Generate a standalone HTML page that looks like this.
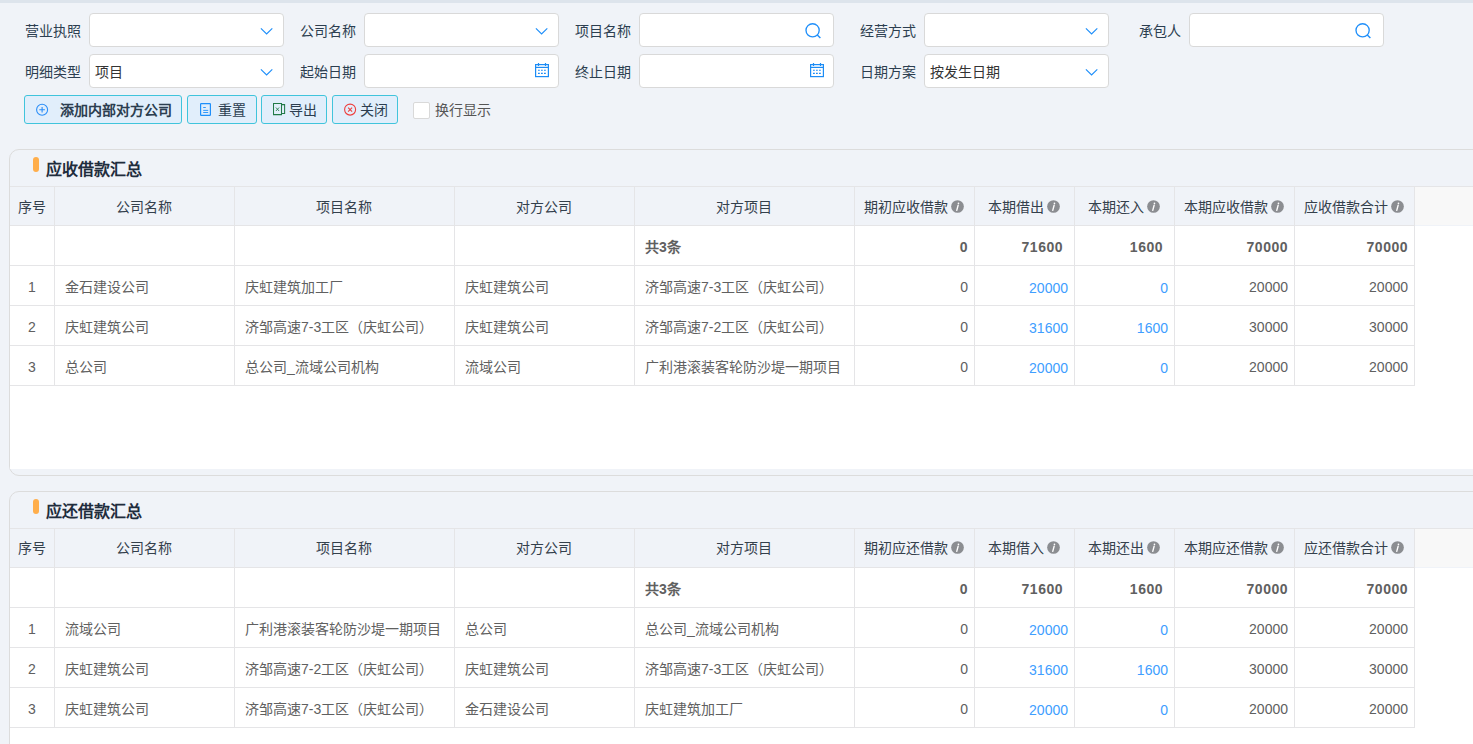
<!DOCTYPE html><html lang="zh-CN"><head><meta charset="utf-8"><style>
*{margin:0;padding:0;box-sizing:border-box}
html,body{width:1473px;height:744px;overflow:hidden}
body{background:#f0f3f8;font-family:"Liberation Sans", sans-serif;font-size:14px;color:#333;position:relative}
.top{position:absolute;left:0;top:0;width:1473px;height:3px;background:#dde4ec}
.lab{position:absolute;width:100px;text-align:right;height:34px;line-height:34px;padding-top:1px;color:#2c3e50;white-space:nowrap}
.inp{position:absolute;height:34px;background:#fff;border:1px solid #d9d9d9;border-radius:4px;line-height:32px;padding-top:1px;padding-left:5px;color:#333;white-space:nowrap}
.ic{position:absolute;display:block}
.btn{position:absolute;top:95px;height:29px;background:#e1eefb;border:1px solid #40c4dc;border-radius:3px}
.btn span{position:absolute;top:1px;line-height:27px;color:#2c3e50;white-space:nowrap}
.chk{position:absolute;left:413px;top:102px;width:17px;height:17px;background:#fff;border:1px solid #d9d9d9;border-radius:2px}
.chklab{position:absolute;left:435px;top:96px;line-height:29px;color:#555;white-space:nowrap}
.card{position:absolute;left:9px;width:1480px;border:1px solid #dcdcdc;border-radius:10px;background:#f0f3f8}
.pill{position:absolute;left:33px;width:6px;height:15px;border-radius:3px;background:#ffae4b}
.title{position:absolute;left:46px;font-size:16px;font-weight:bold;color:#1f2d3d;line-height:20px;white-space:nowrap}
.hdr{position:absolute;left:10px;width:1405px;height:40px;background:#f0f3f8}
.hdrx{position:absolute;left:1415px;width:70px;height:38px;background:#f8f8f8}
.body{position:absolute;left:10px;width:1470px;background:#fff}
.hl{position:absolute;left:10px;width:1405px;height:1px;background:#e5e5e7}
.vl{position:absolute;width:1px;background:#e5e5e7}
.th{position:absolute;height:38px;line-height:38px;padding-top:1px;text-align:center;color:#34404c;white-space:nowrap}
.info{display:inline-block;margin-left:3px;vertical-align:-1px}
.td{position:absolute;height:40px;line-height:40px;padding-top:1px;color:#606060;white-space:nowrap}
.td.c{text-align:center}
.td.r{text-align:right;padding-top:1px}
.td.c{padding-top:1px}
.td.lnk{padding-top:2px}
.td.sm{padding-top:1px;letter-spacing:0.5px}
.td.b{font-weight:bold}
.td.lnk{color:#409eff}
</style></head><body><div class="top"></div><div class="lab" style="left:-19px;top:13px">营业执照</div><div class="inp" style="left:89px;top:13px;width:195px"></div><svg class="ic" style="left:260px;top:27px" width="14" height="8" viewBox="0 0 14 8"><path d="M0.9 1.3 L6.6 7 L12.3 1.3" fill="none" stroke="#1f8ffa" stroke-width="1.15"/></svg><div class="lab" style="left:256px;top:13px">公司名称</div><div class="inp" style="left:364px;top:13px;width:195px"></div><svg class="ic" style="left:535px;top:27px" width="14" height="8" viewBox="0 0 14 8"><path d="M0.9 1.3 L6.6 7 L12.3 1.3" fill="none" stroke="#1f8ffa" stroke-width="1.15"/></svg><div class="lab" style="left:531px;top:13px">项目名称</div><div class="inp" style="left:639px;top:13px;width:195px"></div><svg class="ic" style="left:805px;top:22px" width="18" height="18" viewBox="0 0 18 18"><circle cx="7.6" cy="8.3" r="6.6" fill="none" stroke="#1f8ffa" stroke-width="1.35"/><path d="M12.3 13 L15.4 16.1" stroke="#1f8ffa" stroke-width="1.35"/></svg><div class="lab" style="left:816px;top:13px">经营方式</div><div class="inp" style="left:924px;top:13px;width:185px"></div><svg class="ic" style="left:1085px;top:27px" width="14" height="8" viewBox="0 0 14 8"><path d="M0.9 1.3 L6.6 7 L12.3 1.3" fill="none" stroke="#1f8ffa" stroke-width="1.15"/></svg><div class="lab" style="left:1081px;top:13px">承包人</div><div class="inp" style="left:1189px;top:13px;width:195px"></div><svg class="ic" style="left:1355px;top:22px" width="18" height="18" viewBox="0 0 18 18"><circle cx="7.6" cy="8.3" r="6.6" fill="none" stroke="#1f8ffa" stroke-width="1.35"/><path d="M12.3 13 L15.4 16.1" stroke="#1f8ffa" stroke-width="1.35"/></svg><div class="lab" style="left:-19px;top:54px">明细类型</div><div class="inp" style="left:89px;top:54px;width:195px">项目</div><svg class="ic" style="left:260px;top:68px" width="14" height="8" viewBox="0 0 14 8"><path d="M0.9 1.3 L6.6 7 L12.3 1.3" fill="none" stroke="#1f8ffa" stroke-width="1.15"/></svg><div class="lab" style="left:256px;top:54px">起始日期</div><div class="inp" style="left:364px;top:54px;width:195px"></div><svg class="ic" style="left:534px;top:62px" width="16" height="16" viewBox="0 0 16 16"><rect x="1.6" y="2.6" width="12.8" height="12" fill="none" stroke="#1c8cf5" stroke-width="1.2"/><path d="M1.6 5.4 H14.4" stroke="#1c8cf5" stroke-width="1.2"/><path d="M4.5 1 V4 M11.5 1 V4" stroke="#1c8cf5" stroke-width="1.2"/><path d="M4 8.2 H12 M4 11.4 H12" stroke="#1c8cf5" stroke-width="1.1" stroke-dasharray="1.8 1.2"/></svg><div class="lab" style="left:531px;top:54px">终止日期</div><div class="inp" style="left:639px;top:54px;width:195px"></div><svg class="ic" style="left:809px;top:62px" width="16" height="16" viewBox="0 0 16 16"><rect x="1.6" y="2.6" width="12.8" height="12" fill="none" stroke="#1c8cf5" stroke-width="1.2"/><path d="M1.6 5.4 H14.4" stroke="#1c8cf5" stroke-width="1.2"/><path d="M4.5 1 V4 M11.5 1 V4" stroke="#1c8cf5" stroke-width="1.2"/><path d="M4 8.2 H12 M4 11.4 H12" stroke="#1c8cf5" stroke-width="1.1" stroke-dasharray="1.8 1.2"/></svg><div class="lab" style="left:816px;top:54px">日期方案</div><div class="inp" style="left:924px;top:54px;width:185px">按发生日期</div><svg class="ic" style="left:1085px;top:68px" width="14" height="8" viewBox="0 0 14 8"><path d="M0.9 1.3 L6.6 7 L12.3 1.3" fill="none" stroke="#1f8ffa" stroke-width="1.15"/></svg><div class="btn" style="left:24px;width:158px"><svg class="ic" style="left:10px;top:7px" width="14" height="14" viewBox="0 0 14 14"><circle cx="7.1" cy="6.7" r="5.5" fill="none" stroke="#2b8ef8" stroke-width="1.1"/><path d="M7.1 4 V9.4 M4.3 6.7 H9.9" stroke="#2b8ef8" stroke-width="1.1"/></svg><span style="left:35px;font-weight:bold">添加内部对方公司</span></div><div class="btn" style="left:187px;width:70px"><svg class="ic" style="left:12px;top:7px" width="12" height="14" viewBox="0 0 12 14"><rect x="0.6" y="0.6" width="9.8" height="11.8" rx="0.6" fill="none" stroke="#1e8ffa" stroke-width="1.2"/><path d="M3.2 4.5 H5.8 M3.2 7.4 H8.2 M3.2 9.5 H8.2" stroke="#1e8ffa" stroke-width="0.9"/></svg><span style="left:30px">重置</span></div><div class="btn" style="left:261px;width:66px"><svg class="ic" style="left:11px;top:7px" width="14" height="14" viewBox="0 0 14 14"><path d="M0.5 0.5 H8.5 V11.6 H0.5 Z" fill="none" stroke="#217a48" stroke-width="1.05"/><path d="M8.5 1.6 H11.6 V10.5 H8.5" fill="none" stroke="#217a48" stroke-width="1.05"/><path d="M2.9 4.5 L6.1 8 M6.1 4.5 L2.9 8" stroke="#217a48" stroke-width="0.85"/></svg><span style="left:27px">导出</span></div><div class="btn" style="left:332px;width:66px"><svg class="ic" style="left:11px;top:7px" width="14" height="14" viewBox="0 0 14 14"><circle cx="6.1" cy="6.6" r="5.5" fill="none" stroke="#ee3e3e" stroke-width="1.1"/><path d="M4.1 4.6 L8.1 8.6 M8.1 4.6 L4.1 8.6" stroke="#ee3e3e" stroke-width="1.1"/></svg><span style="left:27px">关闭</span></div><div class="chk"></div><div class="chklab">换行显示</div><div class="card" style="top:149px;height:327px"></div><div class="pill" style="top:157px"></div><div class="title" style="top:160px">应收借款汇总</div><div class="hdr" style="top:186px"></div><div class="hdrx" style="top:187px"></div><div class="body" style="top:226px;height:243px"></div><div class="hl" style="top:186px;width:1470px"></div><div class="hl" style="top:225px"></div><div class="hl" style="top:265px"></div><div class="hl" style="top:305px"></div><div class="hl" style="top:345px"></div><div class="hl" style="top:385px"></div><div class="vl" style="left:54px;top:186px;height:200px"></div><div class="vl" style="left:234px;top:186px;height:200px"></div><div class="vl" style="left:454px;top:186px;height:200px"></div><div class="vl" style="left:634px;top:186px;height:200px"></div><div class="vl" style="left:854px;top:186px;height:200px"></div><div class="vl" style="left:974px;top:186px;height:200px"></div><div class="vl" style="left:1074px;top:186px;height:200px"></div><div class="vl" style="left:1174px;top:186px;height:200px"></div><div class="vl" style="left:1294px;top:186px;height:200px"></div><div class="vl" style="left:1414px;top:186px;height:200px"></div><div class="th" style="left:10px;width:44px;top:187px">序号</div><div class="th" style="left:54px;width:180px;top:187px">公司名称</div><div class="th" style="left:234px;width:220px;top:187px">项目名称</div><div class="th" style="left:454px;width:180px;top:187px">对方公司</div><div class="th" style="left:634px;width:220px;top:187px">对方项目</div><div class="th" style="left:854px;width:120px;top:187px">期初应收借款<svg class="info" width="13" height="13" viewBox="0 0 13 13"><circle cx="6.5" cy="6.5" r="6.35" fill="#8b8d91"/><circle cx="7.45" cy="3.3" r="0.85" fill="#fff"/><path d="M7.15 5.2 L5.75 10.4" stroke="#fff" stroke-width="1.35" stroke-linecap="round"/></svg></div><div class="th" style="left:974px;width:100px;top:187px">本期借出<svg class="info" width="13" height="13" viewBox="0 0 13 13"><circle cx="6.5" cy="6.5" r="6.35" fill="#8b8d91"/><circle cx="7.45" cy="3.3" r="0.85" fill="#fff"/><path d="M7.15 5.2 L5.75 10.4" stroke="#fff" stroke-width="1.35" stroke-linecap="round"/></svg></div><div class="th" style="left:1074px;width:100px;top:187px">本期还入<svg class="info" width="13" height="13" viewBox="0 0 13 13"><circle cx="6.5" cy="6.5" r="6.35" fill="#8b8d91"/><circle cx="7.45" cy="3.3" r="0.85" fill="#fff"/><path d="M7.15 5.2 L5.75 10.4" stroke="#fff" stroke-width="1.35" stroke-linecap="round"/></svg></div><div class="th" style="left:1174px;width:120px;top:187px">本期应收借款<svg class="info" width="13" height="13" viewBox="0 0 13 13"><circle cx="6.5" cy="6.5" r="6.35" fill="#8b8d91"/><circle cx="7.45" cy="3.3" r="0.85" fill="#fff"/><path d="M7.15 5.2 L5.75 10.4" stroke="#fff" stroke-width="1.35" stroke-linecap="round"/></svg></div><div class="th" style="left:1294px;width:120px;top:187px">应收借款合计<svg class="info" width="13" height="13" viewBox="0 0 13 13"><circle cx="6.5" cy="6.5" r="6.35" fill="#8b8d91"/><circle cx="7.45" cy="3.3" r="0.85" fill="#fff"/><path d="M7.15 5.2 L5.75 10.4" stroke="#fff" stroke-width="1.35" stroke-linecap="round"/></svg></div><div class="td b" style="left:645px;top:226px">共3条</div><div class="td b r sm" style="left:854px;width:114px;top:226px">0</div><div class="td b r sm" style="left:974px;width:89px;top:226px">71600</div><div class="td b r sm" style="left:1074px;width:89px;top:226px">1600</div><div class="td b r sm" style="left:1174px;width:114px;top:226px">70000</div><div class="td b r sm" style="left:1294px;width:114px;top:226px">70000</div><div class="td c" style="left:10px;width:44px;top:266px">1</div><div class="td" style="left:65px;top:266px">金石建设公司</div><div class="td" style="left:245px;top:266px">庆虹建筑加工厂</div><div class="td" style="left:465px;top:266px">庆虹建筑公司</div><div class="td" style="left:645px;top:266px">济邹高速7-3工区（庆虹公司）</div><div class="td r" style="left:854px;width:114px;top:266px">0</div><div class="td r lnk" style="left:974px;width:94px;top:266px">20000</div><div class="td r lnk" style="left:1074px;width:94px;top:266px">0</div><div class="td r" style="left:1174px;width:114px;top:266px">20000</div><div class="td r" style="left:1294px;width:114px;top:266px">20000</div><div class="td c" style="left:10px;width:44px;top:306px">2</div><div class="td" style="left:65px;top:306px">庆虹建筑公司</div><div class="td" style="left:245px;top:306px">济邹高速7-3工区（庆虹公司）</div><div class="td" style="left:465px;top:306px">庆虹建筑公司</div><div class="td" style="left:645px;top:306px">济邹高速7-2工区（庆虹公司）</div><div class="td r" style="left:854px;width:114px;top:306px">0</div><div class="td r lnk" style="left:974px;width:94px;top:306px">31600</div><div class="td r lnk" style="left:1074px;width:94px;top:306px">1600</div><div class="td r" style="left:1174px;width:114px;top:306px">30000</div><div class="td r" style="left:1294px;width:114px;top:306px">30000</div><div class="td c" style="left:10px;width:44px;top:346px">3</div><div class="td" style="left:65px;top:346px">总公司</div><div class="td" style="left:245px;top:346px">总公司_流域公司机构</div><div class="td" style="left:465px;top:346px">流域公司</div><div class="td" style="left:645px;top:346px">广利港滚装客轮防沙堤一期项目</div><div class="td r" style="left:854px;width:114px;top:346px">0</div><div class="td r lnk" style="left:974px;width:94px;top:346px">20000</div><div class="td r lnk" style="left:1074px;width:94px;top:346px">0</div><div class="td r" style="left:1174px;width:114px;top:346px">20000</div><div class="td r" style="left:1294px;width:114px;top:346px">20000</div><div class="card" style="top:491px;height:400px"></div><div class="pill" style="top:499px"></div><div class="title" style="top:502px">应还借款汇总</div><div class="hdr" style="top:528px"></div><div class="hdrx" style="top:529px"></div><div class="body" style="top:568px;height:300px"></div><div class="hl" style="top:528px;width:1470px"></div><div class="hl" style="top:567px"></div><div class="hl" style="top:607px"></div><div class="hl" style="top:647px"></div><div class="hl" style="top:687px"></div><div class="hl" style="top:727px"></div><div class="vl" style="left:54px;top:528px;height:200px"></div><div class="vl" style="left:234px;top:528px;height:200px"></div><div class="vl" style="left:454px;top:528px;height:200px"></div><div class="vl" style="left:634px;top:528px;height:200px"></div><div class="vl" style="left:854px;top:528px;height:200px"></div><div class="vl" style="left:974px;top:528px;height:200px"></div><div class="vl" style="left:1074px;top:528px;height:200px"></div><div class="vl" style="left:1174px;top:528px;height:200px"></div><div class="vl" style="left:1294px;top:528px;height:200px"></div><div class="vl" style="left:1414px;top:528px;height:200px"></div><div class="th" style="left:10px;width:44px;top:528px">序号</div><div class="th" style="left:54px;width:180px;top:528px">公司名称</div><div class="th" style="left:234px;width:220px;top:528px">项目名称</div><div class="th" style="left:454px;width:180px;top:528px">对方公司</div><div class="th" style="left:634px;width:220px;top:528px">对方项目</div><div class="th" style="left:854px;width:120px;top:528px">期初应还借款<svg class="info" width="13" height="13" viewBox="0 0 13 13"><circle cx="6.5" cy="6.5" r="6.35" fill="#8b8d91"/><circle cx="7.45" cy="3.3" r="0.85" fill="#fff"/><path d="M7.15 5.2 L5.75 10.4" stroke="#fff" stroke-width="1.35" stroke-linecap="round"/></svg></div><div class="th" style="left:974px;width:100px;top:528px">本期借入<svg class="info" width="13" height="13" viewBox="0 0 13 13"><circle cx="6.5" cy="6.5" r="6.35" fill="#8b8d91"/><circle cx="7.45" cy="3.3" r="0.85" fill="#fff"/><path d="M7.15 5.2 L5.75 10.4" stroke="#fff" stroke-width="1.35" stroke-linecap="round"/></svg></div><div class="th" style="left:1074px;width:100px;top:528px">本期还出<svg class="info" width="13" height="13" viewBox="0 0 13 13"><circle cx="6.5" cy="6.5" r="6.35" fill="#8b8d91"/><circle cx="7.45" cy="3.3" r="0.85" fill="#fff"/><path d="M7.15 5.2 L5.75 10.4" stroke="#fff" stroke-width="1.35" stroke-linecap="round"/></svg></div><div class="th" style="left:1174px;width:120px;top:528px">本期应还借款<svg class="info" width="13" height="13" viewBox="0 0 13 13"><circle cx="6.5" cy="6.5" r="6.35" fill="#8b8d91"/><circle cx="7.45" cy="3.3" r="0.85" fill="#fff"/><path d="M7.15 5.2 L5.75 10.4" stroke="#fff" stroke-width="1.35" stroke-linecap="round"/></svg></div><div class="th" style="left:1294px;width:120px;top:528px">应还借款合计<svg class="info" width="13" height="13" viewBox="0 0 13 13"><circle cx="6.5" cy="6.5" r="6.35" fill="#8b8d91"/><circle cx="7.45" cy="3.3" r="0.85" fill="#fff"/><path d="M7.15 5.2 L5.75 10.4" stroke="#fff" stroke-width="1.35" stroke-linecap="round"/></svg></div><div class="td b" style="left:645px;top:568px">共3条</div><div class="td b r sm" style="left:854px;width:114px;top:568px">0</div><div class="td b r sm" style="left:974px;width:89px;top:568px">71600</div><div class="td b r sm" style="left:1074px;width:89px;top:568px">1600</div><div class="td b r sm" style="left:1174px;width:114px;top:568px">70000</div><div class="td b r sm" style="left:1294px;width:114px;top:568px">70000</div><div class="td c" style="left:10px;width:44px;top:608px">1</div><div class="td" style="left:65px;top:608px">流域公司</div><div class="td" style="left:245px;top:608px">广利港滚装客轮防沙堤一期项目</div><div class="td" style="left:465px;top:608px">总公司</div><div class="td" style="left:645px;top:608px">总公司_流域公司机构</div><div class="td r" style="left:854px;width:114px;top:608px">0</div><div class="td r lnk" style="left:974px;width:94px;top:608px">20000</div><div class="td r lnk" style="left:1074px;width:94px;top:608px">0</div><div class="td r" style="left:1174px;width:114px;top:608px">20000</div><div class="td r" style="left:1294px;width:114px;top:608px">20000</div><div class="td c" style="left:10px;width:44px;top:648px">2</div><div class="td" style="left:65px;top:648px">庆虹建筑公司</div><div class="td" style="left:245px;top:648px">济邹高速7-2工区（庆虹公司）</div><div class="td" style="left:465px;top:648px">庆虹建筑公司</div><div class="td" style="left:645px;top:648px">济邹高速7-3工区（庆虹公司）</div><div class="td r" style="left:854px;width:114px;top:648px">0</div><div class="td r lnk" style="left:974px;width:94px;top:648px">31600</div><div class="td r lnk" style="left:1074px;width:94px;top:648px">1600</div><div class="td r" style="left:1174px;width:114px;top:648px">30000</div><div class="td r" style="left:1294px;width:114px;top:648px">30000</div><div class="td c" style="left:10px;width:44px;top:688px">3</div><div class="td" style="left:65px;top:688px">庆虹建筑公司</div><div class="td" style="left:245px;top:688px">济邹高速7-3工区（庆虹公司）</div><div class="td" style="left:465px;top:688px">金石建设公司</div><div class="td" style="left:645px;top:688px">庆虹建筑加工厂</div><div class="td r" style="left:854px;width:114px;top:688px">0</div><div class="td r lnk" style="left:974px;width:94px;top:688px">20000</div><div class="td r lnk" style="left:1074px;width:94px;top:688px">0</div><div class="td r" style="left:1174px;width:114px;top:688px">20000</div><div class="td r" style="left:1294px;width:114px;top:688px">20000</div></body></html>
